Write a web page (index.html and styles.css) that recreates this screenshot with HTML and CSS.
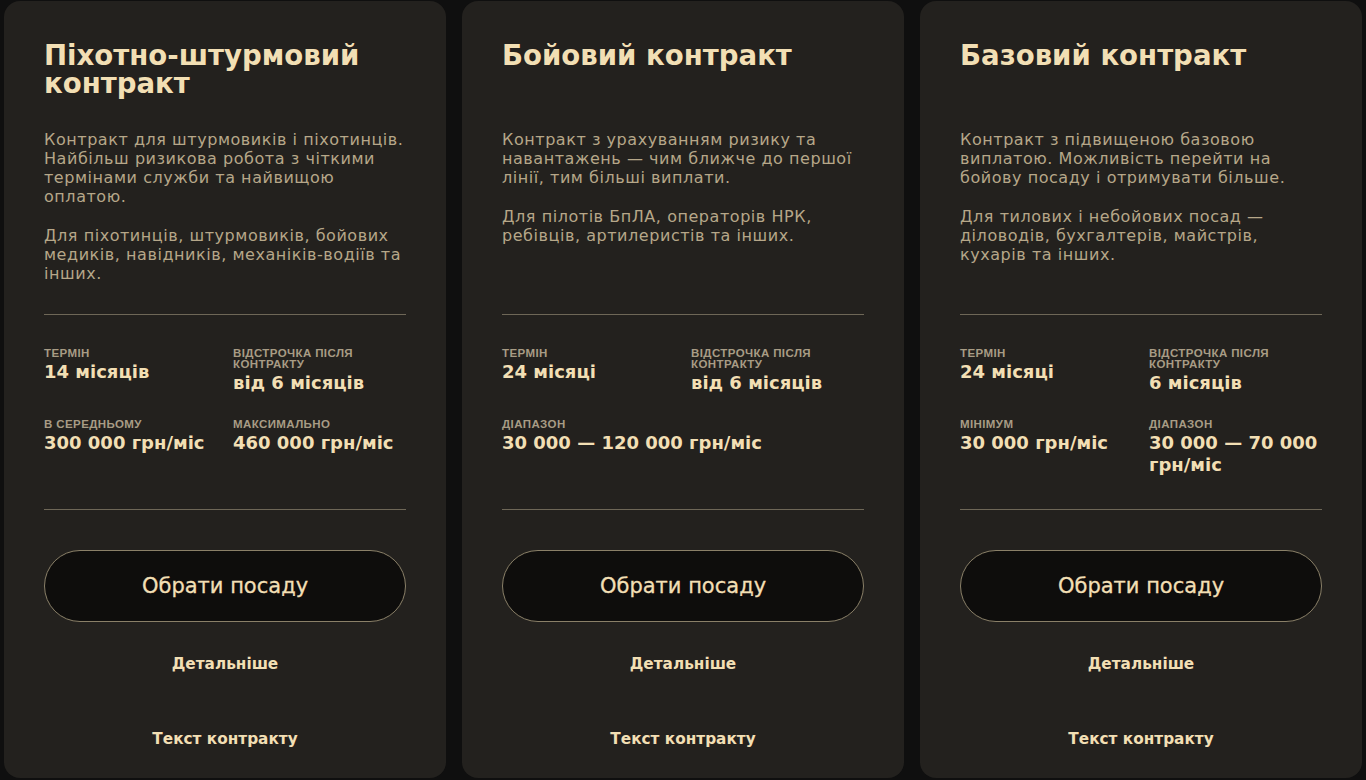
FILE: index.html
```html
<!DOCTYPE html>
<html lang="uk">
<head>
  <meta charset="utf-8">
  <title>Контракти</title>
  <link rel="stylesheet" href="styles.css">
</head>
<body>
  <main class="plans">

    <!-- Піхотно-штурмовий -->
    <article class="plan">
      <h2 class="plan-title">Піхотно-штурмовий контракт</h2>
      <div class="plan-text">
        <p>Контракт для штурмовиків і піхотинців. Найбільш ризикова робота з чіткими термінами служби та найвищою оплатою.</p>
        <p>Для піхотинців, штурмовиків, бойових медиків, навідників, механіків-водіїв та інших.</p>
      </div>
      <div class="plan-facts">
        <div class="fact">
          <div class="fact-label">Термін</div>
          <div class="fact-value">14 місяців</div>
        </div>
        <div class="fact">
          <div class="fact-label">Відстрочка після контракту</div>
          <div class="fact-value">від 6 місяців</div>
        </div>
        <div class="fact">
          <div class="fact-label">В середньому</div>
          <div class="fact-value">300 000 грн/міс</div>
        </div>
        <div class="fact">
          <div class="fact-label">Максимально</div>
          <div class="fact-value">460 000 грн/міс</div>
        </div>
      </div>
      <a class="plan-btn" href="#">Обрати посаду</a>
      <a class="plan-link" href="#">Детальніше</a>
      <a class="plan-link plan-link--last" href="#">Текст контракту</a>
    </article>

    <!-- Бойовий -->
    <article class="plan">
      <h2 class="plan-title">Бойовий контракт</h2>
      <div class="plan-text">
        <p>Контракт з урахуванням ризику та навантажень — чим ближче до першої лінії, тим більші виплати.</p>
        <p>Для пілотів БпЛА, операторів НРК, ребівців, артилеристів та інших.</p>
      </div>
      <div class="plan-facts">
        <div class="fact">
          <div class="fact-label">Термін</div>
          <div class="fact-value">24 місяці</div>
        </div>
        <div class="fact">
          <div class="fact-label">Відстрочка після контракту</div>
          <div class="fact-value">від 6 місяців</div>
        </div>
        <div class="fact fact--wide">
          <div class="fact-label">Діапазон</div>
          <div class="fact-value">30 000 — 120 000 грн/міс</div>
        </div>
      </div>
      <a class="plan-btn" href="#">Обрати посаду</a>
      <a class="plan-link" href="#">Детальніше</a>
      <a class="plan-link plan-link--last" href="#">Текст контракту</a>
    </article>

    <!-- Базовий -->
    <article class="plan">
      <h2 class="plan-title">Базовий контракт</h2>
      <div class="plan-text">
        <p>Контракт з підвищеною базовою виплатою. Можливість перейти на бойову посаду і отримувати більше.</p>
        <p>Для тилових і небойових посад — діловодів, бухгалтерів, майстрів, кухарів та інших.</p>
      </div>
      <div class="plan-facts">
        <div class="fact">
          <div class="fact-label">Термін</div>
          <div class="fact-value">24 місяці</div>
        </div>
        <div class="fact">
          <div class="fact-label">Відстрочка після контракту</div>
          <div class="fact-value">6 місяців</div>
        </div>
        <div class="fact">
          <div class="fact-label">Мінімум</div>
          <div class="fact-value">30 000 грн/міс</div>
        </div>
        <div class="fact">
          <div class="fact-label">Діапазон</div>
          <div class="fact-value">30 000 — 70 000 грн/міс</div>
        </div>
      </div>
      <a class="plan-btn" href="#">Обрати посаду</a>
      <a class="plan-link" href="#">Детальніше</a>
      <a class="plan-link plan-link--last" href="#">Текст контракту</a>
    </article>

  </main>
</body>
</html>
```

FILE: styles.css
```css
body {
  margin: 0;
  padding: 1px 4px 2px;
  background-color: #0f0f0f;
  font-family: "DejaVu Sans", sans-serif;
  color: #f0ddb2;
}
.plans {
  display: grid;
  grid-template-columns: repeat(3, 1fr);
  gap: 16px;
}
.plan {
  display: flex;
  flex-direction: column;
  background-color: #23211e;
  border-radius: 16px;
  padding: 41px 40px 29px;
}
.plan-title {
  margin: 0;
  min-height: 56px;
  font-size: 27.6px;
  line-height: 28px;
  font-weight: bold;
  color: #f2dfb4;
}
.plan-text {
  margin-top: 32px;
  height: 152px;
  font-size: 16px;
  line-height: 19px;
  letter-spacing: 0.55px;
  color: #b6a789;
}
.plan-text p {
  margin: 0 0 20px;
}
.plan-facts {
  box-sizing: border-box;
  height: 196px;
  margin-top: 32px;
  padding-top: 33px;
  border-top: 1px solid #6e6757;
  border-bottom: 1px solid #6e6757;
  display: grid;
  grid-template-columns: 1fr 1fr;
  column-gap: 16px;
  row-gap: 25px;
  align-content: start;
}
.fact--wide {
  grid-column: span 2;
}
.fact-label {
  font-family: "Liberation Sans", sans-serif;
  font-size: 11.5px;
  line-height: 11px;
  letter-spacing: 0.4px;
  font-weight: bold;
  text-transform: uppercase;
  color: #a89c85;
  margin-bottom: 2px;
}
.fact-value {
  font-size: 18px;
  line-height: 22px;
  font-weight: bold;
  color: #f2dfb4;
}
.plan-btn {
  display: flex;
  align-items: center;
  justify-content: center;
  box-sizing: border-box;
  height: 72px;
  margin-top: 40px;
  border: 1px solid #8a8068;
  border-radius: 36px;
  background-color: #0e0d0c;
  color: #f2dfb4;
  font-size: 21px;
  -webkit-text-stroke: 0.3px #f2dfb4;
  text-decoration: none;
}
.plan-link {
  display: block;
  margin-top: 32px;
  text-align: center;
  font-size: 15.3px;
  line-height: 20px;
  font-weight: bold;
  color: #f2dfb4;
  text-decoration: none;
}
.plan-link--last {
  margin-top: 55px;
}
```
